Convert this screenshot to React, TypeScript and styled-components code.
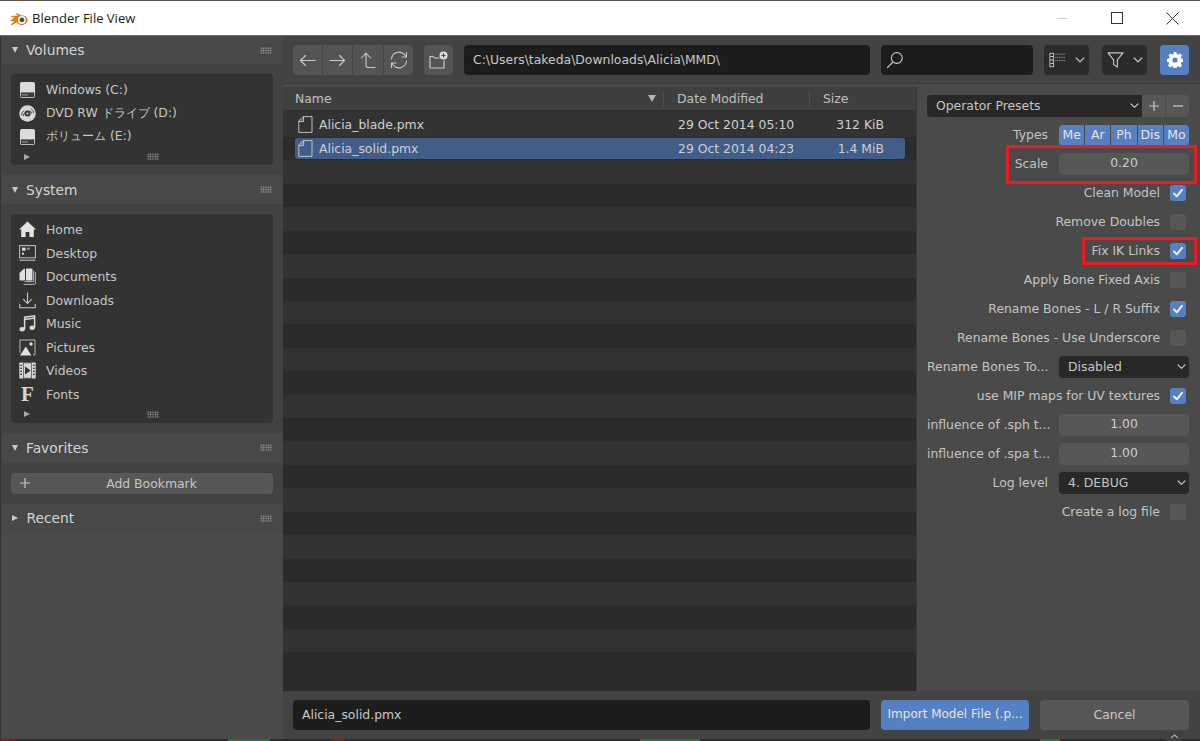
import React from "react";
import styled, { createGlobalStyle } from "styled-components";

const GlobalStyle = createGlobalStyle`
  html, body {
    margin: 0;
    height: 100%;
    background: #262626;
    overflow: hidden;
  }
  #root {
    height: 100%;
  }
`;

const Window = styled.div`
  width: 1200px;
  height: 741px;
  position: relative;
  display: flex;
  flex-direction: column;
  overflow: hidden;
  font-family: "DejaVu Sans", sans-serif;
  font-size: 12.4px;
  color: #c6c6c6;
  background: #4a4a4a;
`;

const TitleBar = styled.div`
  height: 36px;
  box-sizing: border-box;
  border-top: 1px solid #555;
  border-bottom: 1px solid #6b6b6b;
  background: #fff;
  display: flex;
  align-items: center;
  padding: 0 5px 0 10px;
  flex: none;
`;

const TitleText = styled.span`
  font-family: "Open Sans", sans-serif;
  font-size: 13px;
  color: #1b1b1b;
  margin-left: 4px;
  flex: 1;
`;

const WinButton = styled.div`
  width: 46px;
  height: 34px;
  margin-left: 9px;
  display: flex;
  align-items: center;
  justify-content: center;
`;

const Body = styled.div`
  flex: 1;
  display: grid;
  grid-template-columns: 283px 1fr;
  min-height: 0;
`;

const Sidebar = styled.div`
  background: #4a4a4a;
  border-left: 1px solid #333;
  box-sizing: border-box;
`;

const SectionHead = styled.div<{ $h: number }>`
  height: ${(p) => p.$h}px;
  display: flex;
  align-items: center;
  padding: 0 11px;
  font-size: 13.8px;
  color: #d4d4d4;
  background: #484848;
`;

const HeadLabel = styled.span`
  flex: 1;
  margin-left: 8px;
`;

const Tri = styled.span<{ $closed?: boolean }>`
  width: 0;
  height: 0;
  ${(p) =>
    p.$closed
      ? `border-top: 3.8px solid transparent;
         border-bottom: 3.8px solid transparent;
         border-left: 6.5px solid #c8c8c8;
         margin-right: 0.5px;`
      : `border-left: 3.8px solid transparent;
         border-right: 3.8px solid transparent;
         border-top: 6.5px solid #c8c8c8;`}
`;

const Grip = styled.span`
  width: 12px;
  height: 7px;
  background-image: radial-gradient(circle, #a0a0a0 0.7px, transparent 1px);
  background-size: 2.4px 2.4px;
  opacity: 0.75;
`;

const SectionBody = styled.div`
  background: #424242;
  padding: 10px;
`;

const PlaceBox = styled.div`
  background: #333;
  border-radius: 4px;
  padding: 4px 0 0 8px;
`;

const Place = styled.div`
  height: 23.5px;
  display: flex;
  align-items: center;
  gap: 10px;
`;

const PlaceIcon = styled.span`
  width: 17px;
  height: 17px;
  flex: none;
  display: flex;
  align-items: center;
  justify-content: center;
`;

const FontGlyph = styled.span`
  font-family: "Liberation Serif", serif;
  font-weight: 700;
  font-size: 21px;
  line-height: 17px;
  color: #d8d8d8;
`;

const BoxFoot = styled.div`
  height: 16.5px;
  display: flex;
  align-items: center;
  padding-left: 5px;
`;

const FootGrip = styled(Grip)`
  margin-left: 117px;
`;

const SmallTri = styled.span`
  width: 0;
  height: 0;
  border-top: 3px solid transparent;
  border-bottom: 3px solid transparent;
  border-left: 6px solid #a8a8a8;
`;

const BookmarkBtn = styled.div`
  height: 21px;
  border-radius: 4px;
  background: #575757;
  display: flex;
  align-items: center;
  padding: 0 8px;
  color: #c6c6c6;
`;

const BookmarkLabel = styled.span`
  flex: 1;
  text-align: center;
  padding-left: 7px;
`;

const Main = styled.div`
  display: flex;
  flex-direction: column;
  min-width: 0;
`;

const Toolbar = styled.div`
  height: 48px;
  flex: none;
  background: #434343;
  box-sizing: border-box;
  padding: 9px 11px 0 10px;
  display: flex;
  border-bottom: 1px solid #3a3a3a;
`;

const BtnGroup = styled.div`
  display: flex;
  height: 30px;
  border-radius: 4px;
  overflow: hidden;
  gap: 1px;
  margin-right: 11px;
  flex: none;
`;

const ToolBtn = styled.div<{ $w?: number }>`
  width: ${(p) => p.$w ?? 29}px;
  background: #545454;
  display: flex;
  align-items: center;
  justify-content: center;
`;

const PathField = styled.div`
  width: 406px;
  height: 30px;
  box-sizing: border-box;
  margin-right: 11px;
  padding: 0 9px;
  flex: none;
  background: #1d1d1d;
  border-radius: 4px;
  line-height: 29px;
  color: #c8c8c8;
`;

const SearchField = styled.div`
  width: 152px;
  height: 30px;
  flex: none;
  box-sizing: border-box;
  margin-right: 11px;
  padding-left: 5px;
  background: #1d1d1d;
  border-radius: 4px;
  display: flex;
  align-items: center;
`;

const DropBtn = styled.div`
  width: 45px;
  height: 30px;
  margin-right: 13px;
  flex: none;
  background: #2b2b2b;
  border-radius: 4px;
  display: flex;
  align-items: center;
  justify-content: center;
  gap: 9px;
`;

const GearBtn = styled.div`
  width: 29px;
  height: 30px;
  flex: none;
  background: #5680c2;
  border-radius: 4px;
  display: flex;
  align-items: center;
  justify-content: center;
`;

const Content = styled.div`
  flex: 1;
  display: grid;
  grid-template-columns: 634px 1fr;
  min-height: 0;
`;

const FilePane = styled.div`
  background: #2b2b2b;
  overflow: hidden;
  margin-top: 3px;
  border-right: 1px solid #3a3a3a;
  box-sizing: border-box;
`;

const HeaderRow = styled.div`
  height: 24px;
  background: #3f3f3f;
  display: grid;
  grid-template-columns: 381px 146px 1fr;
  align-items: center;
  border-bottom: 1px solid #2f2f2f;
  box-sizing: border-box;
`;

const HeaderCell = styled.div`
  display: flex;
  align-items: center;
  height: 16px;
  padding-left: 13px;
  color: #c0c0c0;
  border-right: 1px solid #4e4e4e;
  &:first-child {
    padding-left: 12px;
  }
  &:last-child {
    border-right: none;
  }
`;

const SortMark = styled.span`
  margin-left: auto;
  margin-right: 7px;
  width: 0;
  height: 0;
  border-left: 4px solid transparent;
  border-right: 4px solid transparent;
  border-top: 7px solid #b4b4b4;
`;

const FileRow = styled.div<{ $odd: boolean; $first?: boolean }>`
  height: ${(p) => (p.$first ? 26 : 23.43)}px;
  background: ${(p) => (p.$odd ? "#2b2b2b" : "#333")};
  padding: ${(p) => (p.$first ? 3 : 1)}px 11px 0 12px;
  box-sizing: border-box;
`;

const FileInner = styled.div<{ $sel?: boolean }>`
  height: 21px;
  display: grid;
  grid-template-columns: 16px 354px 146px 1fr;
  align-items: center;
  border-radius: 3px;
  padding-left: 3px;
  background: ${(p) => (p.$sel ? "#425d88" : "transparent")};
  color: #cfcfcf;
  column-gap: 5px;
  white-space: nowrap;
`;

const SizeCell = styled.span`
  text-align: right;
  padding-right: 21px;
`;

const BottomBar = styled.div`
  height: 48px;
  flex: none;
  background: #434343;
  padding: 9px 11px 0 10px;
  box-sizing: border-box;
  display: flex;
  margin-top: auto;
`;

const NameField = styled.div`
  width: 577px;
  height: 30px;
  box-sizing: border-box;
  background: #1d1d1d;
  border-radius: 4px;
  padding-left: 9px;
  line-height: 29px;
  color: #c8c8c8;
  margin-right: 11px;
  flex: none;
`;

const ActionBtn = styled.div<{ $primary?: boolean }>`
  width: ${(p) => (p.$primary ? 148 : 149)}px;
  height: 30px;
  flex: none;
  border-radius: 4px;
  text-align: center;
  line-height: 29px;
  font-size: ${(p) => (p.$primary ? 12 : 12.4)}px;
  background: ${(p) => (p.$primary ? "#5680c2" : "#575757")};
  color: ${(p) => (p.$primary ? "#e4e4e4" : "#c8c8c8")};
  margin-right: 11px;
  &:last-child {
    margin-right: 0;
  }
`;

const Props = styled.div`
  position: relative;
  background: #4a4a4a;
  padding: 11px 11px 0 10px;
  display: flex;
  flex-direction: column;
  gap: 7px;
`;

const Row = styled.div`
  height: 22px;
  display: grid;
  grid-template-columns: 121px 130px;
  column-gap: 11px;
  align-items: center;
`;

const Label = styled.span`
  text-align: right;
  white-space: nowrap;
  color: #c4c4c4;
  padding-bottom: 1px;
`;

const CheckRow = styled.div`
  height: 22px;
  display: flex;
  align-items: center;
  justify-content: flex-end;
  gap: 10px;
  padding-right: 3px;
`;

const Check = styled.span<{ $on?: boolean }>`
  width: 16px;
  height: 16px;
  border-radius: 3px;
  background: ${(p) => (p.$on ? "#5680c2" : "#575757")};
  display: flex;
  align-items: center;
  justify-content: center;
  flex: none;
`;

const NumberField = styled.div`
  height: 22px;
  background: #575757;
  border-radius: 4px;
  text-align: center;
  line-height: 20px;
  color: #cdcdcd;
`;

const Select = styled.div`
  height: 22px;
  background: #282828;
  border-radius: 4px;
  display: flex;
  align-items: center;
  justify-content: space-between;
  padding: 0 3px 1px 9px;
  box-sizing: border-box;
  color: #c6c6c6;
`;

const PresetRow = styled.div`
  display: flex;
  height: 22px;
`;

const PresetSelect = styled(Select)`
  flex: 1;
  border-radius: 4px 0 0 4px;
`;

const PresetBtn = styled.div<{ $end?: boolean }>`
  width: 23px;
  background: #575757;
  margin-left: ${(p) => (p.$end ? 1 : 0)}px;
  border-radius: ${(p) => (p.$end ? "0 4px 4px 0" : "0")};
  display: flex;
  align-items: center;
  justify-content: center;
`;

const Segments = styled.div`
  display: flex;
  gap: 1px;
  height: 21px;
  border-radius: 4px;
  overflow: hidden;
`;

const Segment = styled.div`
  flex: 1;
  background: #5680c2;
  color: #e6e6e6;
  text-align: center;
  line-height: 20px;
`;

const Mark = styled.div`
  position: absolute;
  box-sizing: border-box;
  border: 3px solid #ec1c24;
`;

const ScaleMark = styled(Mark)`
  left: 89px;
  top: 61px;
  width: 191px;
  height: 39px;
`;

const FixMark = styled(Mark)`
  left: 165px;
  top: 153px;
  width: 115px;
  height: 28px;
`;

const BottomStrip = styled.div`
  height: 2px;
  flex: none;
  background: linear-gradient(
    90deg,
    #7a1f1f 0 15px,
    #2a2a2a 15px 228px,
    #1f7a2c 228px 270px,
    #2a2a2a 270px 330px,
    #7a1f1f 330px 345px,
    #2a2a2a 345px 640px,
    #1f7a2c 640px 700px,
    #2a2a2a 700px 1040px,
    #1f7a2c 1040px 1060px,
    #2a2a2a 1060px
  );
`;

const RegionTab = styled.div`
  position: absolute;
  right: 18px;
  bottom: 0;
  width: 16px;
  height: 9px;
  background: #3f3f3f;
  border-radius: 3px 3px 0 0;
  display: flex;
  align-items: center;
  justify-content: center;
`;

const stroke = "#c8c8c8";

const Ico = ({ children, s = 17, v = 17 }: { children: React.ReactNode; s?: number; v?: number }) => (
  <svg width={s} height={s} viewBox={`0 0 ${v} ${v}`} fill="none" stroke={stroke} strokeWidth="1.1" strokeLinecap="round" strokeLinejoin="round">
    {children}
  </svg>
);

const BlenderLogo = () => (
  <svg width="18" height="15" viewBox="0 0 18 15">
    <path d="M0.5 9.2 L5 6.2 L1.6 6 Q1 5 2 4.8 L8 4.7 L6 3 Q5.8 2 7 2.3 L11.5 4.6 Q16 3.6 17.5 8 Q17.8 12.6 13 14 Q8.8 14.8 6.6 11.2 L2 14 Q0.8 14.6 0.8 13.4 L4.6 10.2 L1.4 10.2 Q0.2 10 0.5 9.2 Z" fill="#ea7600" />
    <circle cx="11.8" cy="8.9" r="3.9" fill="#fff" />
    <circle cx="11.9" cy="8.9" r="2.4" fill="#24598c" />
  </svg>
);

const Disk = () => (
  <svg width="15" height="16" viewBox="0 0 15 16">
    <rect x="0" y="0" width="15" height="16" rx="2" fill="#dcdcdc" />
    <rect x="0.8" y="10.4" width="13.4" height="4.8" fill="#3a3a3a" />
    <path d="M2.5 12.8h1M4.5 12.8h1M6.5 12.8h1" stroke="#dcdcdc" strokeWidth="1.2" />
  </svg>
);

const Dvd = () => (
  <svg width="17" height="17" viewBox="0 0 17 17">
    <circle cx="8.5" cy="8.5" r="8.3" fill="#d6d6d6" />
    <path d="M2.6 10.5a6 6 0 0 1 2.4-5M4.4 11a4 4 0 0 1 1.6-3.4M12 3.6a6 6 0 0 1 2.6 4.6M11 5.6a4 4 0 0 1 1.6 3" stroke="#444" strokeWidth="0.9" fill="none" />
    <circle cx="8.5" cy="8.5" r="3" fill="#333" />
    <circle cx="8.5" cy="8.5" r="1.1" fill="#d6d6d6" />
  </svg>
);

const Home = () => (
  <svg width="17" height="17" viewBox="0 0 17 17">
    <path d="M8.5 0.6 L17 8.4 L14.8 8.4 L14.8 16 L10.4 16 L10.4 11 L6.6 11 L6.6 16 L2.2 16 L2.2 8.4 L0 8.4 Z" fill="#e2e2e2" />
  </svg>
);

const Desktop = () => (
  <svg width="17" height="16" viewBox="0 0 17 16" fill="none">
    <rect x="0.6" y="0.6" width="15.8" height="12.2" stroke="#c4c4c4" strokeWidth="1" />
    <path d="M0.6 15.2h15.8" stroke="#c4c4c4" strokeWidth="1.1" />
    <rect x="3" y="2.6" width="3.6" height="3.2" fill="#d8d8d8" />
    <rect x="8" y="2.6" width="2.6" height="2.2" fill="#9a9a9a" />
    <rect x="3" y="7.6" width="2" height="2" fill="#d8d8d8" />
  </svg>
);

const Docs = () => (
  <svg width="17" height="17" viewBox="0 0 17 17" fill="none">
    <path d="M16.4 4v11.4a1 1 0 0 1-1 1H4.6" stroke="#b8b8b8" strokeWidth="1" />
    <path d="M14.6 2.6v11h-9" stroke="#b8b8b8" strokeWidth="1" />
    <path d="M4 1.5 L0.5 5 V11.6 Q0.5 12.6 1.5 12.6 H6 V0.6 Z" fill="#e0e0e0" />
    <path d="M7 0.4 H12.6 Q13.4 0.4 13.4 1.2 V11.5 Q13.4 12.4 12.6 12.4 H7 Z" fill="#e0e0e0" />
  </svg>
);

const Download = () => (
  <Ico>
    <path d="M8.5 1v10M4.6 7.4l3.9 3.9 3.9-3.9M0.8 12.2v3.6h15.4v-3.6" />
  </Ico>
);

const Music = () => (
  <svg width="17" height="17" viewBox="0 0 17 17" fill="none">
    <path d="M5.6 14V2.2L15.6 0.8V12.6" stroke="#d8d8d8" strokeWidth="1.5" />
    <path d="M5.6 4.4L15.6 3" stroke="#d8d8d8" strokeWidth="1.5" />
    <ellipse cx="3.2" cy="14.2" rx="2.7" ry="2.2" fill="#d8d8d8" />
    <ellipse cx="13.2" cy="12.8" rx="2.7" ry="2.2" fill="#d8d8d8" />
  </svg>
);

const Pictures = () => (
  <svg width="17" height="17" viewBox="0 0 17 17" fill="none">
    <path d="M1 14V1H16V15.8H14" stroke="#b8b8b8" strokeWidth="1" />
    <path d="M1 16.6 L6.8 7.6 L12.4 16.6 Z" fill="#e0e0e0" />
    <circle cx="12" cy="5" r="1.7" fill="#e0e0e0" />
  </svg>
);

const Videos = () => (
  <svg width="17" height="17" viewBox="0 0 17 17">
    <rect x="0.3" y="0.5" width="16.4" height="16" fill="#d6d6d6" />
    <rect x="4" y="0.5" width="9" height="16" fill="#333" />
    <rect x="4.6" y="1.2" width="7.8" height="14.6" fill="#d6d6d6" />
    <path d="M1.3 3.4h1.7M1.3 6.4h1.7M1.3 9.4h1.7M1.3 12.4h1.7M14 3.4h1.7M14 6.4h1.7M14 9.4h1.7M14 12.4h1.7" stroke="#333" strokeWidth="1.3" />
    <path d="M6 4.4 L11.6 8.5 L6 12.6 Z" fill="#333" />
  </svg>
);

const FileIcon = () => (
  <svg width="15" height="17" viewBox="0 0 15 17" fill="none">
    <path d="M5 0.6 H14 V16.4 H0.8 V5 Z" stroke="#c0c0c0" strokeWidth="1" />
    <path d="M5.6 1 V5.6 H1" stroke="#c0c0c0" strokeWidth="1" fill="#c0c0c0" fillOpacity="0.35" />
  </svg>
);

const Chevron = ({ w = 9 }: { w?: number }) => (
  <svg width={w} height={w * 0.65} viewBox="0 0 9 6" fill="none" stroke="#c4c4c4" strokeWidth="1.2" strokeLinecap="round" strokeLinejoin="round">
    <path d="M1 1l3.5 3.5L8 1" />
  </svg>
);

const volumes = [
  { name: "Windows (C:)", icon: <Disk /> },
  { name: "DVD RW ドライブ (D:)", icon: <Dvd /> },
  { name: "ボリューム (E:)", icon: <Disk /> },
];

const system = [
  { name: "Home", icon: <Home /> },
  { name: "Desktop", icon: <Desktop /> },
  { name: "Documents", icon: <Docs /> },
  { name: "Downloads", icon: <Download /> },
  { name: "Music", icon: <Music /> },
  { name: "Pictures", icon: <Pictures /> },
  { name: "Videos", icon: <Videos /> },
  { name: "Fonts", icon: <FontGlyph>F</FontGlyph> },
];

const PlaceList = ({ items }: { items: { name: string; icon: React.ReactNode }[] }) => (
  <PlaceBox>
    {items.map((it) => (
      <Place key={it.name}>
        <PlaceIcon>{it.icon}</PlaceIcon>
        <span>{it.name}</span>
      </Place>
    ))}
    <BoxFoot>
      <SmallTri />
      <FootGrip />
    </BoxFoot>
  </PlaceBox>
);

const CheckOption = ({ label, on }: { label: string; on?: boolean }) => (
  <CheckRow>
    <Label>{label}</Label>
    <Check $on={on}>
      {on && (
        <svg width="12" height="12" viewBox="0 0 12 12" fill="none" stroke="#eee" strokeWidth="2" strokeLinecap="round" strokeLinejoin="round">
          <path d="M2 6.5l2.8 2.8L10 2.8" />
        </svg>
      )}
    </Check>
  </CheckRow>
);

const emptyRows = Array.from({ length: 22 }, (_, i) => i);

const App = () => {
  return (
    <Window>
      <GlobalStyle />
      <TitleBar>
        <BlenderLogo />
        <TitleText>Blender File View</TitleText>
        <WinButton>
          <svg width="11" height="1"><rect width="11" height="1" fill="#d0d0d0" /></svg>
        </WinButton>
        <WinButton>
          <svg width="12" height="12" fill="none"><rect x="0.5" y="0.5" width="11" height="11" stroke="#333" /></svg>
        </WinButton>
        <WinButton>
          <svg width="13" height="13" fill="none" stroke="#333"><path d="M0.5 0.5l12 12M12.5 0.5l-12 12" /></svg>
        </WinButton>
      </TitleBar>
      <Body>
        <Sidebar>
          <SectionHead $h={28}>
            <Tri />
            <HeadLabel>Volumes</HeadLabel>
            <Grip />
          </SectionHead>
          <SectionBody>
            <PlaceList items={volumes} />
          </SectionBody>
          <SectionHead $h={29}>
            <Tri />
            <HeadLabel>System</HeadLabel>
            <Grip />
          </SectionHead>
          <SectionBody>
            <PlaceList items={system} />
          </SectionBody>
          <SectionHead $h={30}>
            <Tri />
            <HeadLabel>Favorites</HeadLabel>
            <Grip />
          </SectionHead>
          <SectionBody>
            <BookmarkBtn>
              <svg width="12" height="12" fill="none" stroke="#c8c8c8" strokeWidth="1.2"><path d="M6 1v10M1 6h10" /></svg>
              <BookmarkLabel>Add Bookmark</BookmarkLabel>
            </BookmarkBtn>
          </SectionBody>
          <SectionHead $h={29}>
            <Tri $closed />
            <HeadLabel>Recent</HeadLabel>
            <Grip />
          </SectionHead>
        </Sidebar>
        <Main>
          <Toolbar>
            <BtnGroup>
              <ToolBtn>
                <Ico>
                  <path d="M16 8.5H1.5M6.5 3.5l-5 5 5 5" />
                </Ico>
              </ToolBtn>
              <ToolBtn>
                <Ico>
                  <path d="M1 8.5h14.5M10.5 3.5l5 5-5 5" />
                </Ico>
              </ToolBtn>
              <ToolBtn $w={30}>
                <Ico>
                  <path d="M1.5 6l4.500-5 4.500 5M6 1v12.5q0 2 2 2h7" />
                </Ico>
              </ToolBtn>
              <ToolBtn>
                <Ico s={20} v={20}>
                  <path d="M2.5 9a7.5 7.5 0 0 1 13-4.4l2 2.4M17.5 2.5V7h-4.5M17.5 11a7.5 7.5 0 0 1-13 4.4l-2-2.4M2.5 17.5V13H7" />
                </Ico>
              </ToolBtn>
            </BtnGroup>
            <BtnGroup>
              <ToolBtn>
                <svg width="19" height="18" viewBox="0 0 19 18" fill="none">
                  <path d="M1 17V5.5h3l1.5 1.5h5M15 9.5V17H1" stroke="#c8c8c8" strokeWidth="1.2" />
                  <circle cx="14.5" cy="4.5" r="4" fill="#dcdcdc" />
                  <path d="M14.5 2.4v4.2M12.4 4.5h4.2" stroke="#444" strokeWidth="1.2" />
                </svg>
              </ToolBtn>
            </BtnGroup>
            <PathField>C:\Users\takeda\Downloads\Alicia\MMD\</PathField>
            <SearchField>
              <Ico s={18} v={18}>
                <circle cx="10.8" cy="7" r="5.4" />
                <path d="M7 11L1.5 16.5" />
              </Ico>
            </SearchField>
            <DropBtn>
              <svg width="17" height="18" viewBox="0 0 19 18" fill="none">
                <rect x="1" y="1.5" width="4" height="15" stroke="#c8c8c8" strokeWidth="1" />
                <path d="M1.5 5h3M1.5 9h3M1.5 13h3" stroke="#c8c8c8" strokeWidth="1.2" />
                <path d="M7 2.5h11M7 6h11M7 9.5h11" stroke="#a8a8a8" strokeWidth="1" strokeDasharray="1.2 0.8" />
              </svg>
              <Chevron w={10} />
            </DropBtn>
            <DropBtn>
              <svg width="17" height="18" viewBox="0 0 18 18" fill="none" stroke="#c8c8c8" strokeWidth="1.2" strokeLinejoin="round">
                <path d="M1 1.5h16L11 8.8v7.7l-4-2.6V8.8z" />
              </svg>
              <Chevron w={10} />
            </DropBtn>
            <GearBtn>
              <svg width="16" height="16" viewBox="0 0 16 16">
                <path fill="#fff" fillRule="evenodd" d="M6.6 0h2.8l.4 2.2 1.3.6 1.9-1.3 2 2-1.3 1.9.6 1.3 2.2.4v2.8l-2.2.4-.6 1.3 1.3 1.9-2 2-1.9-1.3-1.3.6-.4 2.2H6.6l-.4-2.2-1.3-.6L3 15.5l-2-2 1.3-1.9-.6-1.3L0 9.9V7l2.2-.4.6-1.3L1.5 3.4l2-2 1.9 1.3 1.3-.6zM8 5.400a2.600 2.600 0 1 0 0 5.200 2.600 2.600 0 0 0 0-5.200z" />
              </svg>
            </GearBtn>
          </Toolbar>
          <Content>
            <FilePane>
              <HeaderRow>
                <HeaderCell>
                  Name
                  <SortMark />
                </HeaderCell>
                <HeaderCell>Date Modified</HeaderCell>
                <HeaderCell>Size</HeaderCell>
              </HeaderRow>
              <FileRow $odd={false} $first>
                <FileInner>
                  <FileIcon />
                  <span>Alicia_blade.pmx</span>
                  <span>29 Oct 2014 05:10</span>
                  <SizeCell>312 KiB</SizeCell>
                </FileInner>
              </FileRow>
              <FileRow $odd>
                <FileInner $sel>
                  <FileIcon />
                  <span>Alicia_solid.pmx</span>
                  <span>29 Oct 2014 04:23</span>
                  <SizeCell>1.4 MiB</SizeCell>
                </FileInner>
              </FileRow>
              {emptyRows.map((i) => (
                <FileRow key={i} $odd={i % 2 === 1} />
              ))}
            </FilePane>
            <Props>
              <PresetRow>
                <PresetSelect>
                  Operator Presets
                  <Chevron />
                </PresetSelect>
                <PresetBtn>
                  <svg width="12" height="12" fill="none" stroke="#c8c8c8" strokeWidth="1.2"><path d="M6 1v10M1 6h10" /></svg>
                </PresetBtn>
                <PresetBtn $end>
                  <svg width="12" height="12" fill="none" stroke="#c8c8c8" strokeWidth="1.2"><path d="M1 6h10" /></svg>
                </PresetBtn>
              </PresetRow>
              <Row>
                <Label>Types</Label>
                <Segments>
                  <Segment>Me</Segment>
                  <Segment>Ar</Segment>
                  <Segment>Ph</Segment>
                  <Segment>Dis</Segment>
                  <Segment>Mo</Segment>
                </Segments>
              </Row>
              <Row>
                <Label>Scale</Label>
                <NumberField>0.20</NumberField>
              </Row>
              <CheckOption label="Clean Model" on />
              <CheckOption label="Remove Doubles" />
              <CheckOption label="Fix IK Links" on />
              <CheckOption label="Apply Bone Fixed Axis" />
              <CheckOption label="Rename Bones - L / R Suffix" on />
              <CheckOption label="Rename Bones - Use Underscore" />
              <Row>
                <Label>Rename Bones To...</Label>
                <Select>
                  Disabled
                  <Chevron />
                </Select>
              </Row>
              <CheckOption label="use MIP maps for UV textures" on />
              <Row>
                <Label>influence of .sph t...</Label>
                <NumberField>1.00</NumberField>
              </Row>
              <Row>
                <Label>influence of .spa t...</Label>
                <NumberField>1.00</NumberField>
              </Row>
              <Row>
                <Label>Log level</Label>
                <Select>
                  4. DEBUG
                  <Chevron />
                </Select>
              </Row>
              <CheckOption label="Create a log file" />
              <ScaleMark />
              <FixMark />
            </Props>
          </Content>
          <BottomBar>
            <NameField>Alicia_solid.pmx</NameField>
            <ActionBtn $primary>Import Model File (.p...</ActionBtn>
            <ActionBtn>Cancel</ActionBtn>
          </BottomBar>
        </Main>
      </Body>
      <BottomStrip />
      <RegionTab>
        <svg width="9" height="5" viewBox="0 0 9 5" fill="none" stroke="#aaa" strokeWidth="1.1"><path d="M1 4l3.500-3L8 4" /></svg>
      </RegionTab>
    </Window>
  );
};

export default App;
